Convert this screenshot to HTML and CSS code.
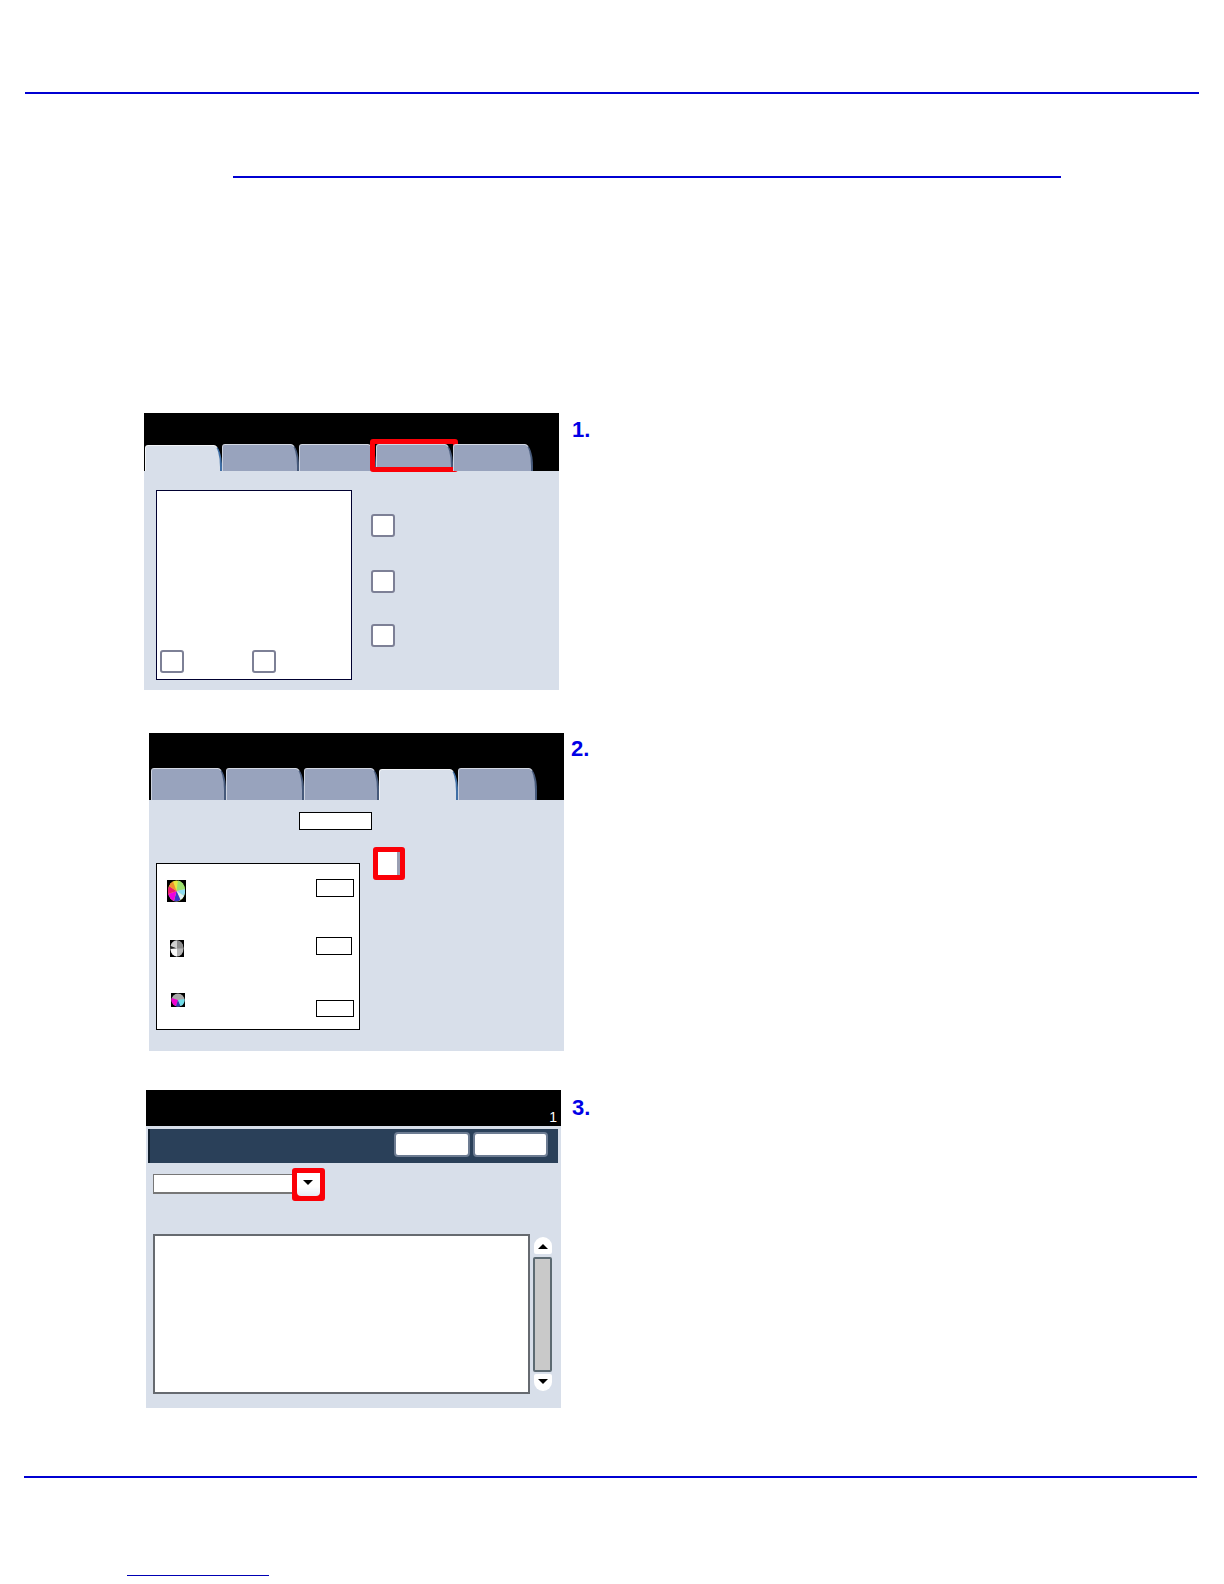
FILE: index.html
```html
<!DOCTYPE html>
<html lang="en">
<head>
<meta charset="utf-8">
<title>Printer screen steps</title>
<link rel="stylesheet" href="styles.css">
</head>
<body>
<main class="page">
  <div class="rule rule-top"></div>
  <div class="rule rule-title"></div>

  <section class="step step-one">
    <div class="screen screen-one">
      <div class="head head-one">
        <div class="tabs tabs-one">
          <div class="tab tab-active w77"></div>
          <div class="tab w77"></div>
          <div class="tab w77"></div>
          <div class="tab w77"><span class="hilite"></span></div>
          <div class="tab w80"></div>
        </div>
      </div>
      <div class="body body-one">
        <div class="white-box box-one">
          <span class="sq"></span>
          <span class="sq"></span>
        </div>
        <div class="sq-stack">
          <span class="sq"></span>
          <span class="sq"></span>
          <span class="sq"></span>
        </div>
      </div>
    </div>
    <div class="num num-one">1.</div>
  </section>

  <section class="step step-two">
    <div class="screen screen-two">
      <div class="head head-two">
        <div class="tabs tabs-two">
          <div class="tab w75"></div>
          <div class="tab w78"></div>
          <div class="tab w75"></div>
          <div class="tab tab-active w79"></div>
          <div class="tab w79"></div>
        </div>
      </div>
      <div class="body body-two">
        <div class="field field-top"></div>
        <div class="two-row">
          <div class="white-box box-two">
            <div class="color-row row-a">
              <svg class="wheel wheel-a" viewBox="0 0 19 22" aria-hidden="true">
                <rect width="19" height="22" fill="#000"/>
                <ellipse cx="9.5" cy="11" rx="8.5" ry="10.5" fill="#e8e840"/>
                <path d="M9.5 11 L11 .6 A8.5 10.5 0 0 1 18 9 Z" fill="#9ce070"/>
                <path d="M9.5 11 L18 9 A8.5 10.5 0 0 1 17 16 Z" fill="#8fdcf0"/>
                <path d="M9.5 11 L17 16 A8.5 10.5 0 0 1 13.5 20 Z" fill="#dff2fa"/>
                <path d="M9.5 11 L13.5 20 A8.5 10.5 0 0 1 7 21 Z" fill="#3a38c8"/>
                <path d="M9.5 11 L7 21 A8.5 10.5 0 0 1 1.2 14 Z" fill="#f000e0"/>
                <path d="M9.5 11 L1.2 14 A8.5 10.5 0 0 1 2 6 Z" fill="#f01870"/>
                <path d="M9.5 11 L2 6 A8.5 10.5 0 0 1 6 1.5 Z" fill="#f09030"/>
              </svg>
              <span class="field field-s"></span>
            </div>
            <div class="color-row row-b">
              <svg class="wheel wheel-b" viewBox="0 0 14 17" aria-hidden="true">
                <rect width="14" height="17" fill="#000"/>
                <ellipse cx="7" cy="8.5" rx="6.5" ry="8" fill="#b4b4b4"/>
                <path d="M7 8.5 L.6 6 A6.5 8 0 0 1 7 .5 Z" fill="#d0d0d0"/>
                <path d="M7 8.5 L.6 6 A6.5 8 0 0 0 .5 9 Z" fill="#222"/>
                <path d="M7 8.5 L.5 9 A6.5 8 0 0 0 7 16.5 Z" fill="#f8f8f8"/>
                <path d="M7 8.5 L7 .5 A6.5 8 0 0 1 13.5 8.5 Z" fill="#8c8c8c"/>
              </svg>
              <span class="field field-s field-narrow"></span>
            </div>
            <div class="color-row row-c">
              <svg class="wheel wheel-c" viewBox="0 0 14 14" aria-hidden="true">
                <rect width="14" height="14" fill="#000"/>
                <circle cx="7" cy="7" r="6.5" fill="#a8a8a8"/>
                <path d="M7 7 L.8 5 A6.5 6.5 0 0 0 5 13.2 Z" fill="#f000d0"/>
                <path d="M7 7 L5 13.2 A6.5 6.5 0 0 0 9.5 13 Z" fill="#3038b0"/>
                <path d="M7 7 L9.5 13 A6.5 6.5 0 0 0 13.4 6 Z" fill="#70dce8"/>
              </svg>
              <span class="field field-s field-low"></span>
            </div>
          </div>
          <div class="red-square"></div>
        </div>
      </div>
    </div>
    <div class="num num-two">2.</div>
  </section>

  <section class="step step-three">
    <div class="screen screen-three">
      <div class="head head-three"><span class="counter">1</span></div>
      <div class="body body-three">
        <div class="title-bar">
          <span class="bar-btn"></span>
          <span class="bar-btn bar-btn-b"></span>
        </div>
        <div class="select-row">
          <div class="select-field"></div>
          <div class="select-btn">
            <div class="select-inner">
              <svg class="arrow" viewBox="0 0 10 5" aria-hidden="true"><path d="M0 0H10L5 5Z"/></svg>
            </div>
          </div>
        </div>
        <div class="list-row">
          <div class="list"></div>
          <div class="scroll">
            <div class="scroll-btn scroll-up">
              <svg class="arrow" viewBox="0 0 10 5" aria-hidden="true"><path d="M0 5H10L5 0Z"/></svg>
            </div>
            <div class="scroll-track"></div>
            <div class="scroll-btn scroll-down">
              <svg class="arrow" viewBox="0 0 10 5" aria-hidden="true"><path d="M0 0H10L5 5Z"/></svg>
            </div>
          </div>
        </div>
      </div>
    </div>
    <div class="num num-three">3.</div>
  </section>

  <div class="rule rule-bottom"></div>
  <div class="link-line"></div>
</main>
</body>
</html>
```

FILE: styles.css
```css
* { box-sizing: border-box; }

html, body {
  margin: 0;
  padding: 0;
  background: #fff;
}

.page {
  width: 1224px;
  height: 1584px;
  overflow: hidden;
  background: #fff;
  display: flow-root;
  font-family: "Liberation Sans", Arial, sans-serif;
}

/* rules */
.rule { height: 2px; background: #0000d2; }
.rule-top { width: 1174px; margin: 92px 0 0 25px; }
.rule-title { width: 828px; margin: 82px 0 0 233px; }
.rule-bottom { width: 1173px; margin: 68px 0 0 24px; }
.link-line { width: 142px; height: 1px; margin: 97px 0 0 127px; background: #0000b4; }

/* steps */
.step { display: flex; align-items: flex-start; }
.step-one { margin: 235px 0 0 144px; gap: 13px; }
.step-two { margin: 43px 0 0 149px; gap: 7px; }
.step-three { margin: 39px 0 0 146px; gap: 11px; }

.num {
  font-size: 22px;
  line-height: 24px;
  font-weight: 700;
  color: #0000e6;
}
.num-one { margin-top: 5px; }
.num-two { margin-top: 4px; }
.num-three { margin-top: 6px; }

/* screen */
.screen { width: 415px; display: flex; flex-direction: column; }
.screen-one { height: 277px; }
.screen-two { height: 318px; }
.screen-three { height: 318px; }

.head { background: #000; display: flex; flex: none; align-items: flex-end; }
.head-one { height: 58px; padding-left: 1px; }
.head-two { height: 67px; padding-left: 2px; }
.head-three { height: 36px; justify-content: flex-end; padding: 0 4px 1px 0; }

.body { background: #d8dfea; flex: 1; }

/* tabs */
.tabs { display: flex; align-items: flex-end; }
.tab {
  position: relative;
  background: #98a3bd;
  border-style: solid;
  border-color: #d3d8e3 #46597a transparent #ccd2df;
  border-width: 1px 2px 0 1px;
  border-radius: 3px 8px 0 0 / 3px 22px 0 0;
}
.tabs-one .tab { height: 27px; }
.tabs-one .tab-active { height: 26px; }
.tabs-two .tab { height: 32px; }
.tabs-two .tab-active { height: 31px; }
.tab-active {
  background: #d8dfea;
  border-color: #f2f4f7 #3f6fa6 transparent #f2f4f7;
}
.w75 { width: 75px; }
.w77 { width: 77px; }
.w78 { width: 78px; }
.w79 { width: 79px; }
.w80 { width: 80px; }

.hilite {
  position: absolute;
  left: -7px;
  right: -7px;
  top: -6px;
  bottom: -1px;
  border: 5px solid #fb0007;
  border-radius: 3px;
}

/* shared boxes */
.white-box { background: #fff; border: 1px solid #000; }

.sq {
  display: block;
  width: 24px;
  height: 23px;
  background: #fff;
  border: 2px solid #7d8096;
  border-radius: 3px;
}

.field { background: #fff; border: 1px solid #000; }

/* panel one */
.body-one { display: flex; align-items: flex-start; gap: 19px; padding: 19px 0 0 12px; }
.box-one {
  width: 196px;
  height: 190px;
  border-color: #000030;
  display: flex;
  align-items: flex-end;
  gap: 68px;
  padding: 0 0 6px 3px;
}
.sq-stack { display: flex; flex-direction: column; margin-top: 24px; }
.sq-stack .sq + .sq { margin-top: 33px; }
.sq-stack .sq:last-child { margin-top: 31px; }

/* panel two */
.body-two { padding: 12px 0 0 7px; }
.field-top { width: 73px; height: 18px; margin-left: 143px; }
.two-row { display: flex; align-items: flex-start; gap: 13px; margin-top: 17px; }
.box-two { width: 204px; height: 167px; margin-top: 16px; padding: 15px 5px 0 0; }
.color-row { display: flex; justify-content: space-between; align-items: flex-start; }
.row-a { padding-left: 10px; height: 23px; }
.row-b { padding-left: 13px; margin-top: 35px; height: 20px; }
.row-c { padding-left: 14px; margin-top: 36px; }
.wheel { display: block; flex: none; }
.wheel-a { width: 19px; height: 22px; margin-top: 1px; }
.wheel-b { width: 14px; height: 17px; margin-top: 3px; }
.wheel-c { width: 14px; height: 14px; }
.field-s { display: block; width: 38px; height: 18px; }
.field-narrow { width: 36px; margin-right: 2px; }
.field-low { height: 17px; margin-top: 7px; }

.red-square {
  width: 32px;
  height: 33px;
  background: #fff;
  border: 5px solid #fb0007;
  border-radius: 3px;
  box-shadow: inset -3px 0 0 #9a9fb2;
}

/* panel three */
.counter { color: #fff; font-size: 14px; line-height: 16px; }

.title-bar {
  height: 34px;
  margin: 3px 3px 0 2px;
  display: flex;
  justify-content: flex-end;
  gap: 3px;
  padding: 3px 10px 0 0;
  background: #2a4059;
  border-left: 2px solid #12202f;
}
.bar-btn {
  width: 76px;
  height: 25px;
  background: #fff;
  border: 2px solid #6d7c92;
  border-radius: 4px;
}
.bar-btn-b { width: 75px; }

.select-row { display: flex; align-items: flex-start; margin: 5px 0 0 7px; }
.select-field {
  width: 139px;
  height: 20px;
  margin-top: 6px;
  background: #fff;
  border-style: solid;
  border-color: #777;
  border-width: 1px 0 2px 1px;
}
.select-btn {
  width: 33px;
  height: 33px;
  border: 5px solid #fb0007;
  border-radius: 3px;
  background: #fb0007;
}
.select-inner {
  height: 100%;
  display: flex;
  justify-content: center;
  align-items: flex-start;
  padding: 7px 2px 0 0;
  background: linear-gradient(#fff 60%, #e6eaf4);
  border-radius: 0 0 4px 4px;
}
.arrow { display: block; width: 10px; height: 5px; fill: #000; }

.list-row { display: flex; align-items: flex-start; gap: 3px; margin: 33px 0 0 7px; }
.list {
  width: 377px;
  height: 160px;
  background: #fff;
  border: 2px solid #666a70;
}
.scroll { width: 19px; margin-top: 3px; display: flex; flex-direction: column; align-items: flex-end; }
.scroll-btn {
  width: 18px;
  height: 17px;
  display: flex;
  align-items: center;
  justify-content: center;
  background: #fff;
}
.scroll-up { border-radius: 9px 9px 2px 2px; padding-top: 2px; }
.scroll-down { border-radius: 2px 2px 9px 9px; margin-top: 2px; padding-bottom: 3px; }
.scroll-track {
  width: 19px;
  height: 115px;
  margin-top: 3px;
  background: #c9c9c9;
  border: 2px solid #5c6a72;
  border-radius: 2px;
}
```
